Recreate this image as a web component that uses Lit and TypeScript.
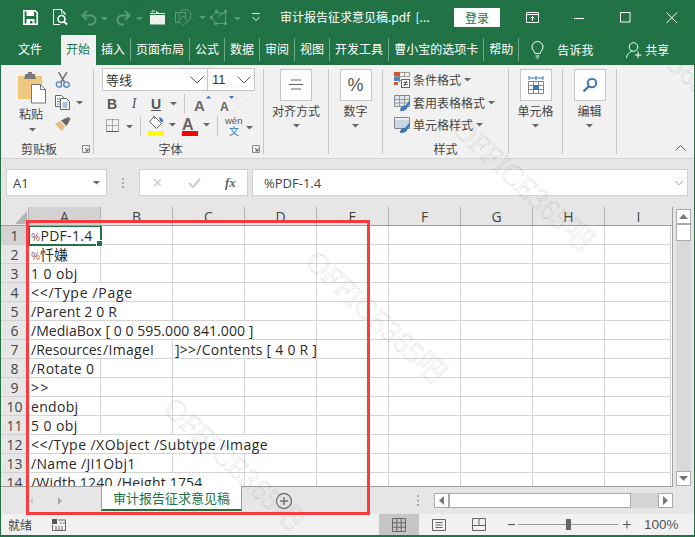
import { LitElement, html, css, svg } from "lit";
import { customElement } from "lit/decorators.js";

const caret = (x: number, y: number, c = "#666") =>
  svg`<path d="M${x} ${y}h7l-3.5 3.5z" fill=${c}/>`;

const DIM = "#5b9a78";

const I = {
  save: html`<svg width="30" height="16" viewBox="0 0 30 16"><path d="M.8.8h11.4l2 2v11.4H.8z" fill="none" stroke="#fff" stroke-width="1.6"/><path d="M3.5 1h7.5v5H3.5zM3.5 9h8v5h-2v-3H7v3H3.5z" fill="#fff"/></svg>`,
  preview: html`<svg width="28" height="17" viewBox="0 0 28 17"><g fill="none" stroke="#fff"><path d="M7 15.5H.5V.5h8l3.5 3.5v2"/><path d="M8.500.5V4H12"/><circle cx="8.500" cy="10" r="3.500" stroke-width="1.600"/><path d="M11 12.500l3 3" stroke-width="2"/></g></svg>`,
  undo: html`<svg width="35" height="16" viewBox="0 0 35 16"><g fill="none" stroke=${DIM} stroke-width="2"><path d="M6 1L1.500 5.500 6 10"/><path d="M2 5.500h8a4.500 4.500 0 0 1 0 9H7"/></g>${caret(20, 7, DIM)}</svg>`,
  redo: html`<svg width="34" height="16" viewBox="0 0 34 16"><g fill="none" stroke=${DIM} stroke-width="2"><path d="M9 1l4.500 4.500L9 10"/><path d="M13 5.500H6a4.500 4.500 0 0 0 0 9h2"/></g>${caret(20, 7, DIM)}</svg>`,
  folder: html`<svg width="25" height="15" viewBox="0 0 25 15"><path d="M0 3h6V1l3 2h6v1H0zM0 5h15v9.500H0z" fill="#f1f1f1"/><path d="M2 2.500V1h3" fill="none" stroke="#f1f1f1"/></svg>`,
  shape: html`<svg width="35" height="17" viewBox="0 0 35 17"><g fill="none" stroke=${DIM}><rect x=".5" y="3.500" width="10" height="10"/><circle cx="10" cy="6.500" r="6"/><path d="M8 7l5 5-5 4.500-5-4.500z" fill="#217346"/></g>${caret(24, 7, DIM)}</svg>`,
  nodes: html`<svg width="42" height="15" viewBox="0 0 42 15"><g fill=${DIM}><rect x="0" y="6" width="3" height="3"/><rect x="5" y="0" width="3" height="3"/><rect x="14" y="0" width="3" height="3"/><rect x="14" y="12" width="3" height="3"/><rect x="4" y="12" width="3" height="3"/></g><path d="M2 6l4-3h8M15.500 3v9M14 13.500H7L2 9" fill="none" stroke=${DIM}/><path d="M10 5l4-2M10 5l-2 3" stroke=${DIM}/>${caret(24, 7, DIM)}</svg>`,
  qat: html`<svg width="28" height="10" viewBox="0 0 28 10"><path d="M0 .5h7.500M.5 4L4 7.500 7.500 4" fill="none" stroke="#fff"/></svg>`,
  restore: html`<svg width="48" height="12" viewBox="0 0 48 12"><path d="M.5.500h12v10H.5zM.5 2.500h12" fill="none" stroke="#fff"/><path d="M6.500 9V4.500M4.500 6.500l2-2 2 2" fill="none" stroke="#fff"/></svg>`,
  min: html`<svg width="46" height="12" viewBox="0 0 46 12"><path d="M0 6.500h10" stroke="#fff"/></svg>`,
  max: html`<svg width="46" height="12" viewBox="0 0 46 12"><rect x=".5" y=".5" width="9.500" height="9.500" fill="none" stroke="#fff"/></svg>`,
  close: html`<svg width="12" height="12" viewBox="0 0 12 12"><path d="M.5.500l10.500 10.500M11 .5L.5 11" stroke="#fff" fill="none"/></svg>`,
  bulb: html`<svg width="13" height="18" viewBox="0 0 13 18"><path d="M4 12.500C3.500 10 1 9 1 6a5.500 5.500 0 0 1 11 0c0 3-2.500 4-3 6.500zM4.500 15h4M5.500 17h2" fill="none" stroke="#fff"/></svg>`,
  person: html`<svg width="19" height="17" viewBox="0 0 19 17"><circle cx="7.500" cy="5" r="4.300" fill="none" stroke="#fff"/><path d="M.5 16c.5-4 3-6.500 6-6.700M12 9.500v6.500M9 13h6.500" fill="none" stroke="#fff"/></svg>`,
  paste: html`<svg width="30" height="32" viewBox="0 0 30 32"><path d="M1 4h24v23H1z" fill="#f0c77f"/><path d="M8 4V2h3V0h4v2h3v2l1 3H7z" fill="#7a7a7a"/><path d="M14.500 12.500h9l5 5v13.500h-14z" fill="#fff" stroke="#777"/><path d="M23.500 12.500v5h5" fill="none" stroke="#777"/></svg>`,
  cut: html`<svg width="16" height="16" viewBox="0 0 16 16"><path d="M3.500 0l6 10M12 0L6 10" stroke="#777" stroke-width="1.500" fill="none"/><circle cx="4" cy="12.500" r="2.700" fill="none" stroke="#4f86bd" stroke-width="1.300"/><circle cx="11.500" cy="12.500" r="2.700" fill="none" stroke="#4f86bd" stroke-width="1.300"/></svg>`,
  copy: html`<svg width="30" height="15" viewBox="0 0 30 15"><path d="M.5.500h6l2 2v9H.5z" fill="#fff" stroke="#666"/><path d="M5.500 3.500h6l3 3v8h-9z" fill="#fff" stroke="#666"/><path d="M2 4h3M2 6.500h3M2 9h3M7.500 8h5M7.500 10h5M7.500 12h5" stroke="#4f86bd"/>${caret(21, 6)}</svg>`,
  brush: html`<svg width="16" height="15" viewBox="0 0 16 15"><path d="M0 7l5-3 5 5-3 5.500z" fill="#e8bb80"/><path d="M6 3.500l5-2.500 3.500 3-3 5z" fill="#666"/><path d="M11 1l2.500-1 2 2-1 2z" fill="#666"/></svg>`,
  launch: html`<svg width="16" height="9" viewBox="0 0 16 9"><path d="M5.500 7.500V.5h7v7z" fill="none" stroke="#888"/><path d="M8 3l3 3M11 3.500V6H8.500" fill="none" stroke="#555"/></svg>`,
  borders: html`<svg width="34" height="14" viewBox="0 0 34 14"><path d="M.5.500h12v12H.5zM6.500.5v12M.5 6.500h12" fill="none" stroke="#666" stroke-dasharray="1 1"/><path d="M.5 12.500h12" stroke="#555"/>${caret(20, 6)}</svg>`,
  fill: html`<svg width="36" height="20" viewBox="0 0 36 20"><g transform="translate(6 0)"><path d="M7.500.5l7 7-5 5-7-7z" fill="#fff" stroke="#666"/><path d="M6 0l2 3" stroke="#666"/><path d="M12 1.500c3 0 4.500 2 4 5l-3-1.500z" fill="#3b78b8"/></g><rect x="7" y="15" width="16" height="5" fill="#ff0"/>${caret(28, 7)}</svg>`,
  color: html`<svg width="40" height="20" viewBox="0 0 40 20"><text x="5" y="13.500" font-family="Liberation Sans" font-weight="700" font-size="16" fill="#666">A</text><rect x="5" y="15" width="16" height="5" fill="#f00"/>${caret(26, 7)}</svg>`,
  wen: html`<svg width="38" height="20" viewBox="0 0 38 20"><text x="7" y="8" font-family="Liberation Sans" font-size="9.500" fill="#555">wén</text><text x="11" y="18.500" font-family="Noto Sans CJK SC" font-size="10" fill="#3b78b8">文</text><path d="M28 10h7l-3.500 3.500z" fill="#666"/></svg>`,
  grow: html`<svg width="30" height="20" viewBox="0 0 30 20"><text x="5" y="17" font-family="Liberation Sans" font-weight="700" font-size="15" fill="#666">A</text><path d="M17 4.500h5l-2.500-3z" fill="#3b78b8"/></svg>`,
  shrink: html`<svg width="22" height="20" viewBox="0 0 22 20"><text x="1" y="17" font-family="Liberation Sans" font-weight="700" font-size="12" fill="#666">A</text><path d="M10 2h5l-2.500 3z" fill="#3b78b8"/></svg>`,
  align: html`<svg width="16" height="12" viewBox="0 0 16 12"><path d="M3 1h10M1 5.500h14M3 10h10" stroke="#666" fill="none"/></svg>`,
  cond: html`<svg width="16" height="16" viewBox="0 0 16 16"><path d="M.5.500h15M.5 4.500h15M.5 8.500h8M5.500.5v10M10.500.5v4M15.500.5v4" stroke="#999" fill="none"/><rect x="0" y="0" width="6" height="4" fill="#d2542f"/><rect x="0" y="5" width="6" height="4" fill="#4f86bd"/><rect x="0" y="10" width="4" height="3" fill="#d2542f"/><rect x="7.500" y="7.500" width="8" height="8" fill="#fff" stroke="#666"/><path d="M9.500 10.500h4M9.500 12.500h4M12.500 9l-2 5" stroke="#555" fill="none"/></svg>`,
  table: html`<svg width="16" height="16" viewBox="0 0 16 16"><path d="M.5.500h15v11H.5z" fill="#dfe6ee" stroke="#888"/><path d="M5.500.5v11M10.500.5v11M.5 4.500h15M.5 8h15" stroke="#999"/><path d="M6 16c0-4 3-6 5-5l5-6v3l-3.500 6c-2 2-4 2-6.500 2z" fill="#3b78b8"/></svg>`,
  cstyle: html`<svg width="16" height="16" viewBox="0 0 16 16"><path d="M.5.500h15v11H.5z" fill="#c9d6e4" stroke="#888"/><path d="M1 1h14v2H1z" fill="#eee"/><path d="M6 16c0-4 3-6 5-5l5-6v3l-3.500 6c-2 2-4 2-6.500 2z" fill="#3b78b8"/></svg>`,
  cells: html`<svg width="16" height="18" viewBox="0 0 16 18"><path d="M.5 5.500h15v12H.5zM.5 9.500h15M.5 13.500h15M5.500 5.500v12M10.500 5.500v12" fill="#fff" stroke="#888"/><rect x="5" y="9" width="6" height="5" fill="#3b78b8"/><path d="M1 2h14M1 0v4M8 0v4M15 0v4" stroke="#3b78b8" fill="none"/></svg>`,
  find: html`<svg width="16" height="16" viewBox="0 0 16 16"><circle cx="10" cy="6" r="4.200" fill="none" stroke="#3b78b8" stroke-width="2"/><path d="M7 9l-5.500 5.500" stroke="#3b78b8" stroke-width="2.400"/></svg>`,
  collapse: html`<svg width="11" height="6" viewBox="0 0 11 6"><path d="M.5 5.500L5.500.5l5 5" fill="none" stroke="#555"/></svg>`,
  chev: html`<svg width="14" height="8" viewBox="0 0 14 8"><path d="M.5.500L7 7 13.500.5" fill="none" stroke="#555"/></svg>`,
  vdots: html`<svg width="32" height="12" viewBox="0 0 32 12"><path d="M15 1h2v2h-2zM15 5h2v2h-2zM15 9h2v2h-2z" fill="#aaa"/></svg>`,
  fx: html`<svg width="36" height="14" viewBox="0 0 36 14"><path d="M14 3l7 7M21 3l-7 7" stroke="#ccc" stroke-width="1.600" fill="none"/></svg>`,
  check: html`<svg width="36" height="14" viewBox="0 0 36 14"><path d="M13 7l4 4 7-8" stroke="#ccc" stroke-width="2" fill="none"/></svg>`,
  corner: html`<svg width="28" height="18" viewBox="0 0 28 18"><path d="M14 17L26 4v13z" fill="#b4b4b4"/></svg>`,
  nav: html`<svg width="100" height="10" viewBox="0 0 100 10"><path d="M32 1v8l-4-4z" fill="#cfcfcf"/><path d="M57 1v8l4-4z" fill="#aaa"/></svg>`,
  plus: html`<svg width="50" height="18" viewBox="0 0 50 18"><circle cx="42" cy="9" r="7.500" fill="none" stroke="#777" stroke-width="1.300"/><path d="M38 9h8M42 5v8" stroke="#777" stroke-width="1.500"/></svg>`,
  macro: html`<svg width="14" height="12" viewBox="0 0 14 12"><rect x="0" y="0" width="5" height="5" fill="#555"/><path d="M6 1h7.500v10.500H.5V6" fill="none" stroke="#666"/><path d="M3 8h9M3 10h9M8 4h5" stroke="#666" stroke-dasharray="2 1"/></svg>`,
  normal: html`<svg width="14" height="14" viewBox="0 0 14 14"><path d="M.5.500h13v13H.5zM4.800.5v13M9.200.5v13M.5 4.800h13M.5 9.200h13" fill="none" stroke="#666"/></svg>`,
  layout: html`<svg width="14" height="12" viewBox="0 0 14 12"><path d="M.5.500h13v11H.5z" fill="none" stroke="#666"/><path d="M3.500 3.500h7M3.500 6h7M3.500 8.500h7" stroke="#666"/></svg>`,
  brk: html`<svg width="14" height="13" viewBox="0 0 14 13"><path d="M.5.500h13v12H.5zM7 .5v7H.5 13.500" fill="none" stroke="#666"/></svg>`,
  zoomOut: html`<svg width="19" height="9" viewBox="0 0 19 9"><path d="M9 4.500h7" stroke="#555" stroke-width="1.200"/></svg>`,
  zoomIn: html`<svg width="26" height="9" viewBox="0 0 26 9"><path d="M5 4.500h8M9 .5v8" stroke="#555"/></svg>`,
  up: html`<svg width="9" height="5" viewBox="0 0 9 5"><path d="M0 5L4.500 0 9 5z" fill="#777"/></svg>`,
  down: html`<svg width="9" height="5" viewBox="0 0 9 5"><path d="M0 0l4.500 5L9 0z" fill="#777"/></svg>`,
  left: html`<svg width="5" height="9" viewBox="0 0 5 9"><path d="M5 0L0 4.500 5 9z" fill="#777"/></svg>`,
  right: html`<svg width="5" height="9" viewBox="0 0 5 9"><path d="M0 0l5 4.500L0 9z" fill="#777"/></svg>`,
  small: html`<svg width="7" height="4" viewBox="0 0 7 4"><path d="M0 0h7L3.500 3.500z" fill="#666"/></svg>`,
  hdots: html`<svg width="8" height="11" viewBox="0 0 8 11"><path d="M3 0h2v2H3zM3 4.500h2v2H3zM3 9h2v2H3z" fill="#aaa"/></svg>`,
};

const TABS = ["开始", "插入", "页面布局", "公式", "数据", "审阅", "视图", "开发工具", "曹小宝的选项卡", "帮助"];
const COLS = ["A", "B", "C", "D", "E", "F", "G", "H", "I"];

type Cell = { t: unknown; span: number; ls: number; clip?: boolean };
const c = (t: unknown, span = 1, ls = 0, clip = false): Cell => ({ t, span, ls, clip });
const pct = html`<span class="pct">%</span>`;

// ls: the sheet's font is wider than Open Sans in letters but not in digits
const ROWS: Cell[][] = [
  [c(html`${pct}PDF-1.4`, 1, 0.3)],
  [c(html`${pct}忏嫌`)],
  [c("1 0 obj", 1, 0.4)],
  [c("<</Type /Page", 2, 0.7)],
  [c("/Parent 2 0 R", 2, 0.15)],
  [c("/MediaBox [ 0 0 595.000 841.000 ]", 4, 0.05)],
  [c("/Resources", 1, 0, true), c("/ImageI", 1, 0.3), c("]>>/Contents [ 4 0 R ]", 2, 0.25)],
  [c("/Rotate 0", 1, 0.45)],
  [c(">>", 1, 1.5)],
  [c("endobj", 1, 0.3)],
  [c("5 0 obj", 1, 0.4)],
  [c("<</Type /XObject /Subtype /Image", 4, 0.45)],
  [c("/Name /JI1Obj1", 2, 0.35)],
  [c("/Width 1240 /Height 1754", 3, 0.2)],
];

@customElement("app-root")
export class AppRoot extends LitElement {
  static styles = css`
    :host {
      display: block;
      position: relative;
      width: 695px;
      height: 537px;
      overflow: hidden;
      background: #e6e6e6;
      font-family: "Open Sans", "Noto Sans CJK SC", sans-serif;
      color: #444;
    }
    * { box-sizing: border-box; }
    svg { display: block; flex: none; }
    .win {
      height: 537px;
      display: flex;
      flex-direction: column;
      border-left: 1px solid #217346;
      border-right: 1px solid #217346;
    }

    .title {
      height: 35px;
      margin-left: -1px;
      margin-right: -1px;
      background: #217346;
      display: flex;
      align-items: center;
      padding-left: 23px;
      color: #fff;
      flex: none;
    }
    .name {
      width: 174px;
      font: 12px "Noto Sans CJK SC", sans-serif;
      white-space: nowrap;
      padding-bottom: 2px;
    }
    .login {
      width: 46px;
      height: 19px;
      margin-right: 26px;
      background: #fff;
      color: #217346;
      font: 12px/19px "Noto Sans CJK SC", sans-serif;
      text-align: center;
      border-radius: 1px;
    }

    .tabs {
      height: 30px;
      margin: 0 -1px;
      background: #217346;
      display: flex;
      padding-left: 13px;
      color: #fff;
      font: 12px "Noto Sans CJK SC", sans-serif;
      flex: none;
    }
    .tab {
      height: 23px;
      margin-top: 3px;
      padding: 0 5px;
      line-height: 21px;
      border-right: 1px solid #6ea98a;
      white-space: nowrap;
    }
    .tab.plain { border-right: none; margin-right: 14px; }
    .tab.on {
      height: 30px;
      margin-top: 0;
      padding-top: 3px;
      background: #f1f1f1;
      color: #217346;
      border-right: none;
      width: 35px;
    }
    .tab.last { border-right: 1px solid #6ea98a; margin-right: 12px; }
    .tell { display: flex; align-items: center; height: 30px; }
    .tell span { line-height: 26px; }
    .tell .say { margin-left: 13px; width: 69px; }

    .ribbon {
      height: 94px;
      display: flex;
      padding: 4px 0 0;
      background: #f1f1f1;
      border-bottom: 1px solid #d4d4d4;
      font: 12px/14px "Noto Sans CJK SC", sans-serif;
      flex: none;
    }
    .grp {
      height: 85px;
      display: flex;
      flex-direction: column;
      border-right: 1px solid #c6c6c6;
      flex: none;
    }
    .g-clip { width: 93px; }
    .g-font { width: 170px; }
    .g-big { align-items: center; }
    .g-align { width: 65px; }
    .g-num { width: 54px; }
    .g-style { width: 126px; }
    .g-cell { width: 54px; }
    .g-edit { width: 54px; }
    .body { flex: 1; min-height: 0; }
    .lbl { height: 12px; line-height: 12px; display: flex; align-items: center; margin-bottom: -1px; }
    .lbl b { flex: 1; text-align: center; font-weight: 400; }
    .lbl.full { justify-content: center; }
    .clip { display: flex; padding-left: 8px; }
    .paste {
      width: 46px;
      padding-top: 3px;
      display: flex;
      flex-direction: column;
      align-items: center;
    }
    .paste span { margin-top: 3px; margin-left: -2px; }
    .paste svg:last-child { margin-top: 7px; }
    .tools { display: flex; flex-direction: column; gap: 7px; padding-top: 3px; }

    .fbox {
      display: flex;
      width: 153px;
      height: 23px;
      margin: -1px 0 2px 8px;
      background: #fff;
      border: 1px solid #c6c6c6;
      align-items: center;
    }
    .fname { width: 105px; padding: 0 3px; display: flex; justify-content: space-between; align-items: center; font-size: 13px; color: #333; border-right: 1px solid #c6c6c6; height: 100%; }
    .fsize { flex: 1; padding: 0 3px 0 4px; display: flex; justify-content: space-between; align-items: center; font: 13px "Liberation Sans", sans-serif; color: #333; }
    .frow { display: flex; align-items: center; height: 22px; }
    .r2 { padding-left: 7px; }
    .tb { width: 22px; text-align: center; font: 700 14px "Liberation Sans", sans-serif; color: #555; }
    .tb.i { font-style: italic; font-family: "Liberation Serif", serif; font-weight: 400; }
    .tb.u { text-decoration: underline; }
    .cw { width: 12px; display: flex; justify-content: center; }
    .vsep { width: 1px; height: 20px; background: #c6c6c6; flex: none; }
    .r2 .vsep { margin: 0 4px 0 5px; }
    .r3 { padding-left: 12px; }

    .big {
      width: 32px;
      height: 32px;
      background: #fff;
      border: 1px solid #c6c6c6;
      display: flex;
      align-items: center;
      justify-content: center;
      font: 18px "Liberation Sans", sans-serif;
      color: #555;
    }
    .big + span { margin-top: 3px; white-space: nowrap; }
    .g-big .small { margin-top: 6px; }
    .srow { display: flex; align-items: center; height: 22.500px; padding-left: 11px; color: #444; }
    .srow span { margin: 0 3px 0 3px; }
    .rest { flex: 1; display: flex; justify-content: flex-end; align-items: flex-end; padding: 0 8px 3px 0; height: 85px; }

    .formula {
      height: 48px;
      display: flex;
      padding: 10px 6px 0 5px;
      flex: none;
      background: #e6e6e6;
    }
    .box {
      height: 27px;
      background: #fff;
      border: 1px solid #d0d0d0;
      display: flex;
      align-items: center;
      font-size: 13px;
      color: #444;
    }
    .namebox { width: 101px; padding: 0 6px; justify-content: space-between; }
    .mid { align-self: flex-start; margin-top: 8px; }
    .fxbox { width: 109px; }
    .fxbox i { font: italic 700 13px "Liberation Serif", serif; color: #666; margin-left: 13px; }
    .input { flex: 1; margin-left: 4px; padding: 0 3px 0 11px; justify-content: space-between; }
    .input svg { transform: scale(.6); margin-right: -2px; }

    .sheet { display: flex; height: 279px; flex: none; }
    .gridwrap { width: 672px; flex: none; border-right: 1px solid #9f9f9f; height: 279px; overflow: hidden; }
    .head {
      display: grid;
      grid-template-columns: 28px repeat(8, 72px) 67px;
      height: 19px;
      border-bottom: 1px solid #9f9f9f;
      font-size: 14px;
      color: #444;
    }
    .ch { text-align: center; line-height: 20px; border-right: 1px solid #b4b4b4; height: 18px; }
    .ch.on { background: #d2d2d2; }
    .ch:last-child { border-right: none; }
    .grid {
      display: grid;
      grid-template-columns: 28px repeat(8, 72px) 66px;
      grid-auto-rows: 19px;
      background: #fff;
      height: 260px;
      overflow: hidden;
    }
    .rh {
      background: #e6e6e6;
      border-right: 1px solid #b4b4b4;
      border-bottom: 1px solid #d0d0d0;
      font-size: 14px;
      text-align: center;
      line-height: 20px;
      color: #444;
    }
    .rh.on { background: #d2d2d2; }
    .cell {
      border-right: 1px solid #d4d4d4;
      border-bottom: 1px solid #d4d4d4;
      font-size: 14px;
      line-height: 20px;
      padding-left: 2px;
      white-space: nowrap;
      color: #2a2a2a;
      overflow: visible;
    }
    .cell.clip { overflow: hidden; border-right: none; }
    .cell.sel { outline: 2px solid #217346; outline-offset: -1px; position: relative; z-index: 1; }
    .cell.sel::after {
      content: "";
      position: absolute;
      right: -3px;
      bottom: -3px;
      width: 5px;
      height: 5px;
      background: #217346;
      border: 1px solid #fff;
      box-sizing: content-box;
    }
    .pct { font-size: 11px; color: #9a5a50; }

    .vs {
      width: 21px;
      padding: 2px 3px 0 3px;
      display: flex;
      flex-direction: column;
      height: 279px;
    }
    .sbtn {
      background: #fff;
      border: 1px solid #ababab;
      display: flex;
      align-items: center;
      justify-content: center;
      flex: none;
    }
    .vs .sbtn { height: 15px; width: 15px; }
    .vthumb { height: 17px; width: 15px; background: #fff; border: 1px solid #ababab; }
    .vtrack { flex: 1; width: 15px; background: #d9d9d9; }

    .tabbar {
      height: 28px;
      display: flex;
      align-items: center;
      border-top: 1px solid #9f9f9f;
      margin-right: 21px;
      flex: none;
    }
    .sheettab {
      width: 141px;
      height: 25px;
      align-self: flex-start;
      background: #fff;
      color: #217346;
      border-left: 1px solid #9f9f9f;
      border-right: 1px solid #9f9f9f;
      border-bottom: 2px solid #217346;
      font: 13px/23px "Noto Sans CJK SC", sans-serif;
      text-align: center;
      white-space: nowrap;
      margin-top: -1px;
    }
    .hdots { margin-left: auto; margin-right: 12px; }
    .hs { width: 239px; height: 15px; display: flex; }
    .hs .sbtn { width: 15px; height: 15px; }
    .hthumb { width: 182px; background: #fff; border: 1px solid #ababab; }
    .htrack { flex: 1; background: #d4d4d4; }

    .status {
      height: 21px;
      display: flex;
      align-items: center;
      background: #f1f1f1;
      font: 12px "Noto Sans CJK SC", sans-serif;
      color: #444;
      padding-left: 7px;
      flex: none;
    }
    .status .macro { margin-left: 20px; margin-right: 313px; }
    .view { width: 40px; height: 21px; display: flex; align-items: center; justify-content: center; }
    .view.on { background: #c6c6c6; }
    .slider { width: 100px; height: 1px; background: #999; position: relative; }
    .slider::after { content: ""; position: absolute; left: 48px; top: -5px; width: 5px; height: 11px; background: #666; }
    .zoom { font: 13.500px "Liberation Sans", sans-serif; color: #555; }
    .edge { height: 2px; margin: 0 -1px; background: #217346; flex: none; }

    .redbox {
      position: absolute;
      left: 26px;
      top: 220px;
      width: 344px;
      height: 295px;
      border: 3px solid #fa3b40;
      pointer-events: none;
      z-index: 5;
    }
    .wm {
      position: absolute;
      transform: translate(-50%, -50%) rotate(43deg);
      font: 30px "Liberation Serif", "Noto Sans CJK SC", serif;
      color: rgba(120, 120, 120, 0.04);
      -webkit-text-stroke: 0.4px rgba(110, 110, 110, 0.3);
      white-space: nowrap;
      pointer-events: none;
      z-index: 4;
    }
    .w1 { left: 378px; top: 315px; }
    .w2 { left: 236px; top: 462px; }
    .w3 { left: 525px; top: 182px; }
    .w4 { left: 665px; top: 47px; }
    .w5 { left: 178px; top: 45px; color: transparent; -webkit-text-stroke: 0.4px rgba(60, 60, 60, 0.12); }
  `;

  private renderTitle() {
    return html`<div class="title">
      ${I.save}${I.preview}${I.undo}${I.redo}${I.folder}${I.shape}${I.nodes}${I.qat}
      <div class="name">审计报告征求意见稿.pdf&nbsp; [...</div>
      <div class="login">登录</div>
      ${I.restore}${I.min}${I.max}${I.close}
    </div>`;
  }

  private renderTabs() {
    return html`<div class="tabs">
      <div class="tab plain">文件</div>
      ${TABS.map((t, i) => html`<div class="tab ${i === 0 ? "on" : ""} ${i === TABS.length - 1 ? "last" : ""}">${t}</div>`)}
      <div class="tell">
        ${I.bulb}
        <span class="say">告诉我</span>
        ${I.person}
        <span>共享</span>
      </div>
    </div>`;
  }

  private renderRibbon() {
    return html`<div class="ribbon">
      <div class="grp g-clip">
        <div class="body clip">
          <div class="paste">${I.paste}<span>粘贴</span>${I.small}</div>
          <div class="tools">${I.cut}${I.copy}${I.brush}</div>
        </div>
        <div class="lbl"><b>剪贴板</b>${I.launch}</div>
      </div>
      <div class="grp g-font">
        <div class="body">
          <div class="fbox">
            <div class="fname"><span>等线</span>${I.chev}</div>
            <div class="fsize"><span>11</span>${I.chev}</div>
          </div>
          <div class="frow r2">
            <div class="tb">B</div><div class="tb i">I</div><div class="tb u">U</div>
            <div class="cw">${I.small}</div>
            <div class="vsep"></div>
            ${I.grow}${I.shrink}
          </div>
          <div class="frow r3">
            ${I.borders}<div class="vsep"></div>${I.fill}${I.color}<div class="vsep"></div>${I.wen}
          </div>
        </div>
        <div class="lbl"><b>字体</b>${I.launch}</div>
      </div>
      <div class="grp g-big g-align">
        <div class="big">${I.align}</div><span>对齐方式</span><span class="small">${I.small}</span>
      </div>
      <div class="grp g-big g-num">
        <div class="big">%</div><span>数字</span><span class="small">${I.small}</span>
      </div>
      <div class="grp g-style">
        <div class="body">
          <div class="srow">${I.cond}<span>条件格式</span>${I.small}</div>
          <div class="srow">${I.table}<span>套用表格格式</span>${I.small}</div>
          <div class="srow">${I.cstyle}<span>单元格样式</span>${I.small}</div>
        </div>
        <div class="lbl full">样式</div>
      </div>
      <div class="grp g-big g-cell">
        <div class="big">${I.cells}</div><span>单元格</span><span class="small">${I.small}</span>
      </div>
      <div class="grp g-big g-edit">
        <div class="big">${I.find}</div><span>编辑</span><span class="small">${I.small}</span>
      </div>
      <div class="rest">${I.collapse}</div>
    </div>`;
  }

  private renderFormula() {
    return html`<div class="formula">
      <div class="box namebox"><span>A1</span>${I.small}</div>
      <div class="mid">${I.vdots}</div>
      <div class="box fxbox">${I.fx}${I.check}<i>fx</i></div>
      <div class="box input"><span>%PDF-1.4</span>${I.chev}</div>
    </div>`;
  }

  private renderRow(row: Cell[], r: number) {
    const used = row.reduce((n, x) => n + x.span, 0);
    const blanks = Array.from({ length: 9 - used });
    return html`<div class="rh ${r === 0 ? "on" : ""}">${r + 1}</div>
      ${row.map(
        (x, i) => html`<div
          class="cell ${x.clip ? "clip" : ""} ${r === 0 && i === 0 ? "sel" : ""}"
          style="grid-column: span ${x.span}; letter-spacing: ${x.ls}px"
        >${x.t}</div>`
      )}
      ${blanks.map(() => html`<div class="cell"></div>`)}`;
  }

  private renderSheet() {
    return html`<div class="sheet">
      <div class="gridwrap">
        <div class="head">
          <div class="ch">${I.corner}</div>
          ${COLS.map((n, i) => html`<div class="ch ${i === 0 ? "on" : ""}">${n}</div>`)}
        </div>
        <div class="grid">${ROWS.map((row, r) => this.renderRow(row, r))}</div>
      </div>
      <div class="vs">
        <div class="sbtn">${I.up}</div>
        <div class="vthumb"></div>
        <div class="vtrack"></div>
        <div class="sbtn">${I.down}</div>
      </div>
    </div>`;
  }

  private renderTabbar() {
    return html`<div class="tabbar">
      ${I.nav}
      <div class="sheettab">审计报告征求意见稿</div>
      ${I.plus}
      <span class="hdots">${I.hdots}</span>
      <div class="hs">
        <div class="sbtn">${I.left}</div>
        <div class="hthumb"></div>
        <div class="htrack"></div>
        <div class="sbtn">${I.right}</div>
      </div>
    </div>`;
  }

  private renderStatus() {
    return html`<div class="status">
      <span>就绪</span>
      <span class="macro">${I.macro}</span>
      <div class="view on">${I.normal}</div>
      <div class="view">${I.layout}</div>
      <div class="view">${I.brk}</div>
      ${I.zoomOut}
      <div class="slider"></div>
      ${I.zoomIn}
      <span class="zoom">100%</span>
    </div>`;
  }

  render() {
    return html`
      <div class="win">
        ${this.renderTitle()} ${this.renderTabs()} ${this.renderRibbon()} ${this.renderFormula()}
        ${this.renderSheet()} ${this.renderTabbar()} ${this.renderStatus()}
        <div class="edge"></div>
      </div>
      <div class="redbox"></div>
      <span class="wm w1">OFFICE365吧</span>
      <span class="wm w2">OFFICE365吧</span>
      <span class="wm w3">OFFICE365吧</span>
      <span class="wm w4">OFFICE365吧</span>
      <span class="wm w5">OFFICE365吧</span>
    `;
  }
}
